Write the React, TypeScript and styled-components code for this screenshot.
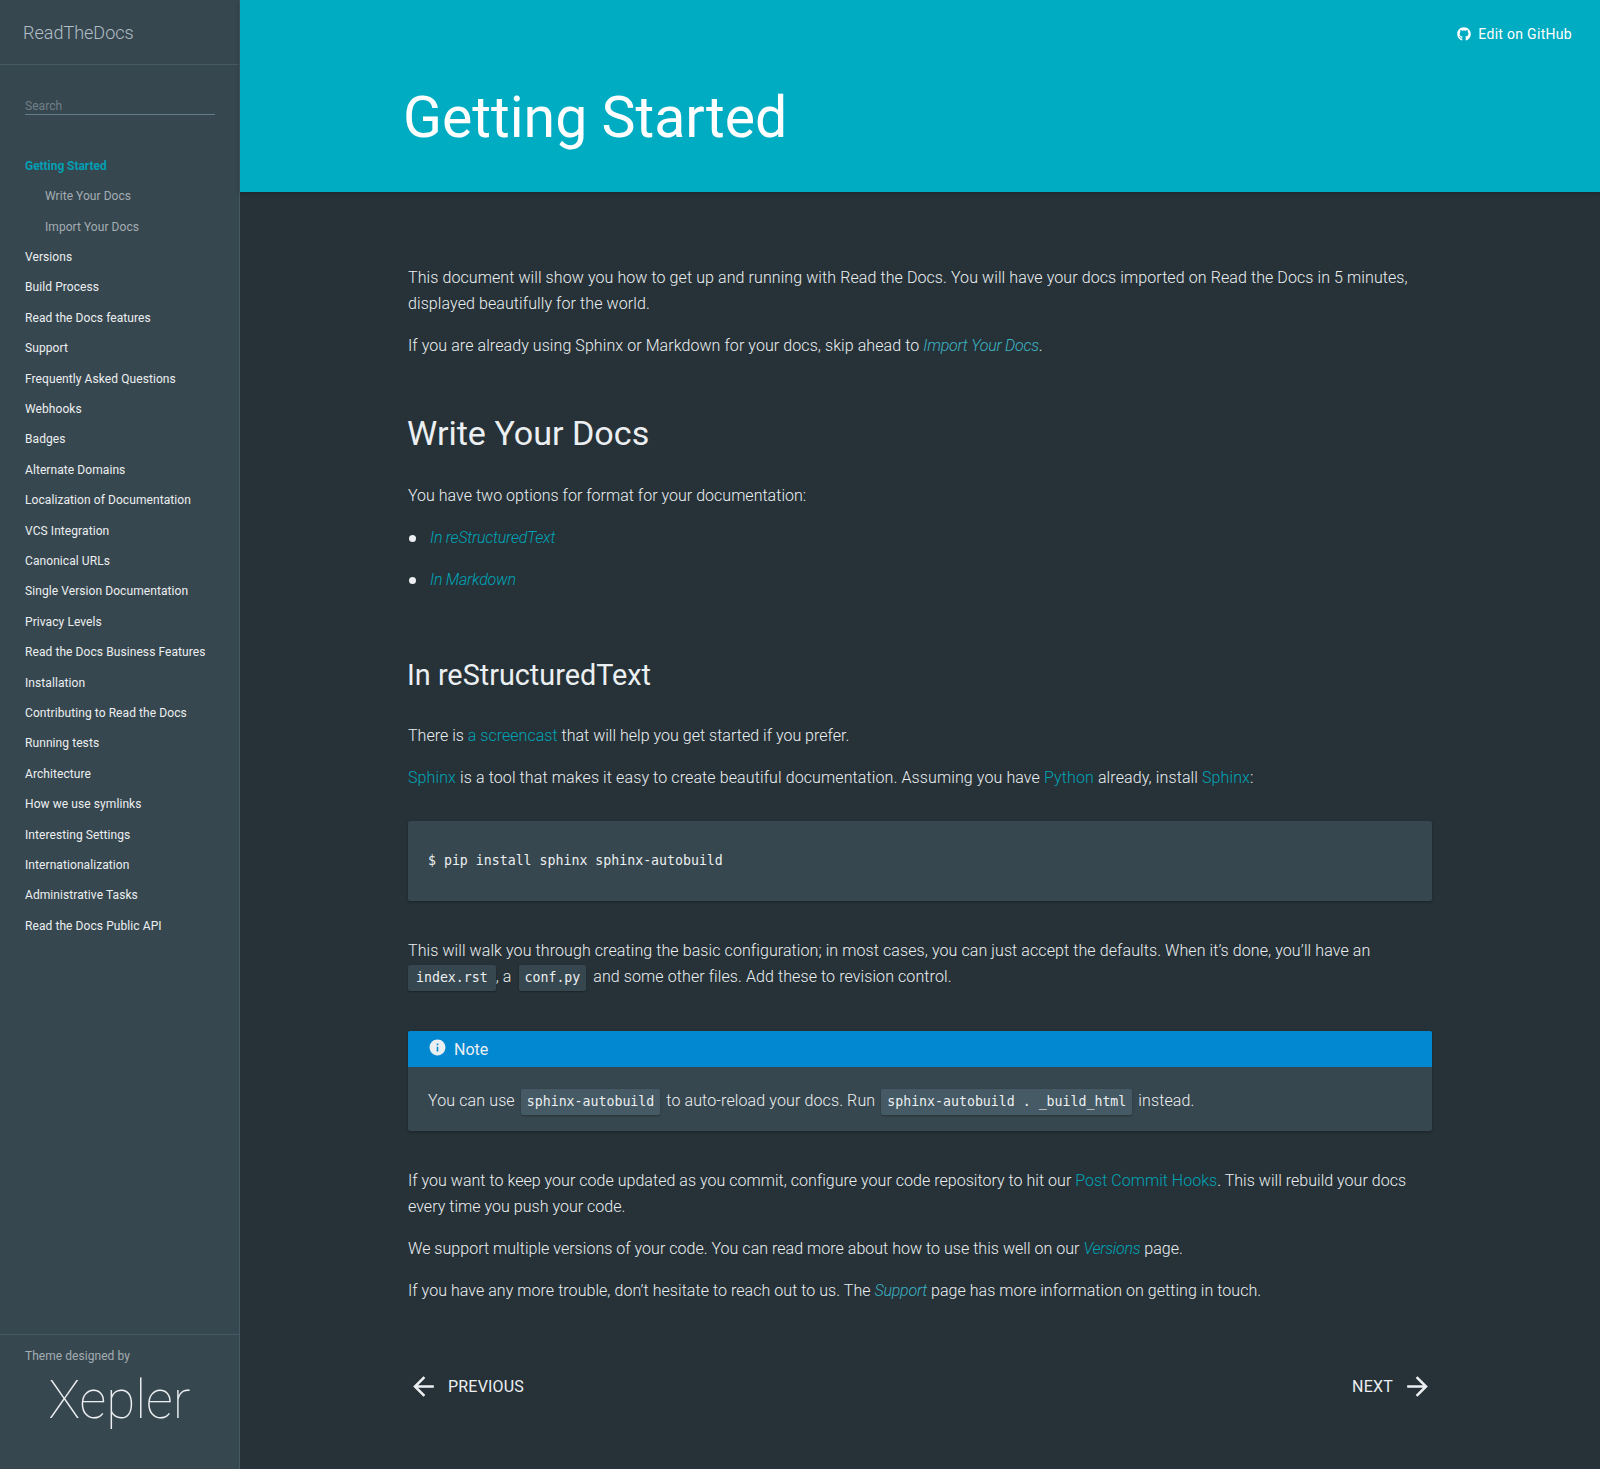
import styled, { createGlobalStyle } from "styled-components";
import { FaGithub } from "react-icons/fa";
import { MdArrowBack, MdArrowForward, MdInfo } from "react-icons/md";

const navItems = [
  "Versions",
  "Build Process",
  "Read the Docs features",
  "Support",
  "Frequently Asked Questions",
  "Webhooks",
  "Badges",
  "Alternate Domains",
  "Localization of Documentation",
  "VCS Integration",
  "Canonical URLs",
  "Single Version Documentation",
  "Privacy Levels",
  "Read the Docs Business Features",
  "Installation",
  "Contributing to Read the Docs",
  "Running tests",
  "Architecture",
  "How we use symlinks",
  "Interesting Settings",
  "Internationalization",
  "Administrative Tasks",
  "Read the Docs Public API",
];

export default function App() {
  return (
    <>
      <GlobalStyle />
      <Page>
        <Sidebar>
          <Brand>ReadTheDocs</Brand>
          <SearchBox>
            <SearchInput placeholder="Search" />
          </SearchBox>
          <Nav>
            <NavLink $active>Getting Started</NavLink>
            <SubLink>Write Your Docs</SubLink>
            <SubLink>Import Your Docs</SubLink>
            {navItems.map((item) => (
              <NavLink key={item}>{item}</NavLink>
            ))}
          </Nav>
          <SideFooter>
            <Credit>Theme designed by</Credit>
            <Logo>Xepler</Logo>
          </SideFooter>
        </Sidebar>
        <Main>
          <Hero>
            <EditLink>
              <FaGithub size={14} />
              Edit on GitHub
            </EditLink>
            <Title>Getting Started</Title>
          </Hero>
          <Content>
            <P $track={0.09}>
              This document will show you how to get up and running with Read the Docs. You will
              have your docs imported on Read the Docs in 5 minutes, displayed beautifully for the
              world.
            </P>
            <P $track={0.08}>
              If you are already using Sphinx or Markdown for your docs, skip ahead to{" "}
              <Ref $bright>Import Your Docs</Ref>.
            </P>
            <H2>Write Your Docs</H2>
            <P $track={0.02}>You have two options for format for your documentation:</P>
            <List>
              <Item>
                <Ref>In reStructuredText</Ref>
              </Item>
              <Item>
                <Ref>In Markdown</Ref>
              </Item>
            </List>
            <H3>In reStructuredText</H3>
            <P $track={0.02}>
              There is <A>a screencast</A> that will help you get started if you prefer.
            </P>
            <P $track={0.11}>
              <A>Sphinx</A> is a tool that makes it easy to create beautiful documentation.
              Assuming you have <A>Python</A> already, install <A>Sphinx</A>:
            </P>
            <CodeBlock>$ pip install sphinx sphinx-autobuild</CodeBlock>
            <P $track={0.09}>
              This will walk you through creating the basic configuration; in most cases, you can
              just accept the defaults. When it’s done, you’ll have an{" "}
              <Code $first>index.rst</Code>, a <Code>conf.py</Code> and some other files. Add these
              to revision control.
            </P>
            <Note>
              <NoteTitle>
                <NoteIcon>
                  <MdInfo size={19} />
                </NoteIcon>
                Note
              </NoteTitle>
              <NoteBody>
                You can use <NoteCode>sphinx-autobuild</NoteCode> to auto-reload your docs. Run{" "}
                <NoteCode>sphinx-autobuild . _build_html</NoteCode> instead.
              </NoteBody>
            </Note>
            <P $track={0.03}>
              If you want to keep your code updated as you commit, configure your code repository
              to hit our <A>Post Commit Hooks</A>. This will rebuild your docs every time you push
              your code.
            </P>
            <P $track={0.03}>
              We support multiple versions of your code. You can read more about how to use this
              well on our <Ref>Versions</Ref> page.
            </P>
            <P $track={0.05}>
              If you have any more trouble, don’t hesitate to reach out to us. The{" "}
              <Ref $bright>Support</Ref> page has more information on getting in touch.
            </P>
            <Pager>
              <PagerLink>
                <MdArrowBack size={31} />
                PREVIOUS
              </PagerLink>
              <PagerLink>
                NEXT
                <MdArrowForward size={31} />
              </PagerLink>
            </Pager>
          </Content>
        </Main>
      </Page>
    </>
  );
}

const GlobalStyle = createGlobalStyle`
  html, body {
    margin: 0;
    padding: 0;
    background: #263238;
  }
  body {
    font-family: Roboto, "Liberation Sans", sans-serif;
    color: #eceff1;
  }
`;

const Page = styled.div`
  display: grid;
  grid-template-columns: 240px 1fr;
  min-height: 1469px;
`;

const Sidebar = styled.aside`
  display: flex;
  flex-direction: column;
  background: #37474f;
  border-right: 1px solid #455a64;
  box-sizing: border-box;
`;

const Brand = styled.div`
  height: 65px;
  box-sizing: border-box;
  padding: 19px 23px 0;
  font-size: 18px;
  line-height: 27px;
  font-weight: 300;
  color: #b0bec5;
  border-bottom: 1px solid #455a64;
`;

const SearchBox = styled.div`
  padding: 32px 24px 0 25px;
`;

const SearchInput = styled.input`
  display: block;
  width: 100%;
  box-sizing: border-box;
  height: 18px;
  padding: 0;
  background: transparent;
  border: 0;
  border-bottom: 1px solid #607d8b;
  font-family: inherit;
  font-size: 12px;
  font-weight: 400;
  letter-spacing: 0.05px;
  color: #eceff1;
  &::placeholder {
    color: #6f8089;
    opacity: 1;
  }
`;

const Nav = styled.nav`
  display: flex;
  flex-direction: column;
  padding: 35.7px 25px 0;
`;

const NavLink = styled.a<{ $active?: boolean }>`
  font-size: 12px;
  line-height: 30.4px;
  letter-spacing: ${(p) => (p.$active ? "-0.05px" : "0.08px")};
  font-weight: ${(p) => (p.$active ? 700 : 400)};
  color: ${(p) => (p.$active ? "#009fb3" : "#eceff1")};
  white-space: nowrap;
`;

const SubLink = styled.a`
  padding-left: 20px;
  font-size: 12px;
  line-height: 30.4px;
  letter-spacing: 0.05px;
  color: #a3adb2;
  white-space: nowrap;
`;

const SideFooter = styled.div`
  margin-top: auto;
  height: 135px;
  box-sizing: border-box;
  border-top: 1px solid #455a64;
  padding: 13px 25px 0;
`;

const Credit = styled.div`
  font-size: 12px;
  line-height: 16px;
  letter-spacing: 0.05px;
  color: #a3adb2;
`;

const Logo = styled.div`
  margin-top: 4px;
  text-align: center;
  font-size: 53px;
  line-height: 64px;
  font-weight: 100;
  color: #eceff1;
`;

const Main = styled.main`
  display: flex;
  flex-direction: column;
  min-width: 0;
`;

const Hero = styled.header`
  position: relative;
  height: 192px;
  box-sizing: border-box;
  padding: 79px 0 0 163px;
  background: #00acc1;
  box-shadow: 0 1px 4px rgba(0, 0, 0, 0.3);
`;

const EditLink = styled.a`
  position: absolute;
  top: 25px;
  right: 28px;
  display: flex;
  align-items: center;
  gap: 7px;
  font-size: 14px;
  line-height: 18px;
  letter-spacing: 0.3px;
  color: #fff;
`;

const Title = styled.h1`
  margin: 0;
  font-size: 57.2px;
  line-height: 78px;
  font-weight: 400;
  color: #fff;
`;

const Content = styled.div`
  width: 1024px;
  box-sizing: border-box;
  margin-left: 168px;
  padding-top: 73px;
`;

const P = styled.p<{ $track: number }>`
  margin: 0 0 16.4px;
  font-size: 16px;
  line-height: 25.6px;
  letter-spacing: ${(p) => p.$track}px;
  font-weight: 300;
`;

const A = styled.a`
  color: #00a4b7;
`;

const Ref = styled(A)<{ $bright?: boolean }>`
  font-style: italic;
  letter-spacing: -0.25px;
  color: ${(p) => (p.$bright ? "#3cb4c4" : "#00a4b7")};
`;

const H2 = styled.h2`
  margin: 53.2px 0 27.5px -1px;
  font-size: 34.1px;
  line-height: 44px;
  font-weight: 400;
`;

const H3 = styled.h3`
  margin: 65px 0 30px -1px;
  font-size: 28.8px;
  line-height: 36px;
  font-weight: 400;
`;

const List = styled.ul`
  margin: 1.5px 0 0;
  padding: 0;
  list-style: none;
`;

const Item = styled.li`
  position: relative;
  margin: 0 0 16.4px;
  padding-left: 22px;
  font-size: 16px;
  line-height: 25.6px;
  font-weight: 300;
  &::before {
    content: "";
    position: absolute;
    left: 1px;
    top: 10px;
    width: 7px;
    height: 7px;
    border-radius: 50%;
    background: #eceff1;
  }
`;

const mono = `"DejaVu Sans Mono", "Liberation Mono", monospace`;

const CodeBlock = styled.pre`
  margin: 30px 0 36.5px;
  height: 80px;
  box-sizing: border-box;
  padding: 0 20px 1px;
  display: flex;
  align-items: center;
  background: #37474f;
  border-radius: 2px;
  box-shadow: 0 1px 3px rgba(0, 0, 0, 0.3);
  font-family: ${mono};
  font-size: 13.24px;
  color: #eceff1;
`;

const Code = styled.code<{ $first?: boolean }>`
  display: inline-block;
  margin: ${(p) => (p.$first ? "1.5px 0 0" : "1.5px 3px 0")};
  padding: 0 ${(p) => (p.$first ? "8px" : "6px")};
  line-height: 26px;
  background: #37474f;
  border-radius: 2px;
  box-shadow: 0 1px 2px rgba(0, 0, 0, 0.3);
  font-family: ${mono};
  font-size: 13.24px;
  letter-spacing: 0;
  font-weight: 400;
  color: #eceff1;
`;

const NoteCode = styled(Code)`
  margin: 0 2px;
  background: #455a64;
`;

const Note = styled.section`
  margin: 40.5px 0 37px;
  background: #37474f;
  border-radius: 2px;
  box-shadow: 0 1px 3px rgba(0, 0, 0, 0.3);
  overflow: hidden;
`;

const NoteTitle = styled.div`
  height: 36px;
  display: flex;
  align-items: center;
  gap: 7px;
  padding: 0 20px;
  background: #0288d1;
  font-size: 16px;
  font-weight: 400;
  color: #eceff1;
`;

const NoteIcon = styled.span`
  display: flex;
  margin-top: -4px;
`;

const NoteBody = styled.p`
  margin: 0;
  padding: 21px 20px 16px;
  font-size: 16px;
  line-height: 25.6px;
  letter-spacing: 0.12px;
  font-weight: 300;
`;

const Pager = styled.nav`
  display: flex;
  justify-content: space-between;
  margin: 68px -1px 0 0;
`;

const PagerLink = styled.a`
  display: flex;
  align-items: center;
  gap: 9px;
  font-size: 16px;
  line-height: 31px;
  letter-spacing: 0.2px;
  font-weight: 400;
  color: #eceff1;
`;
